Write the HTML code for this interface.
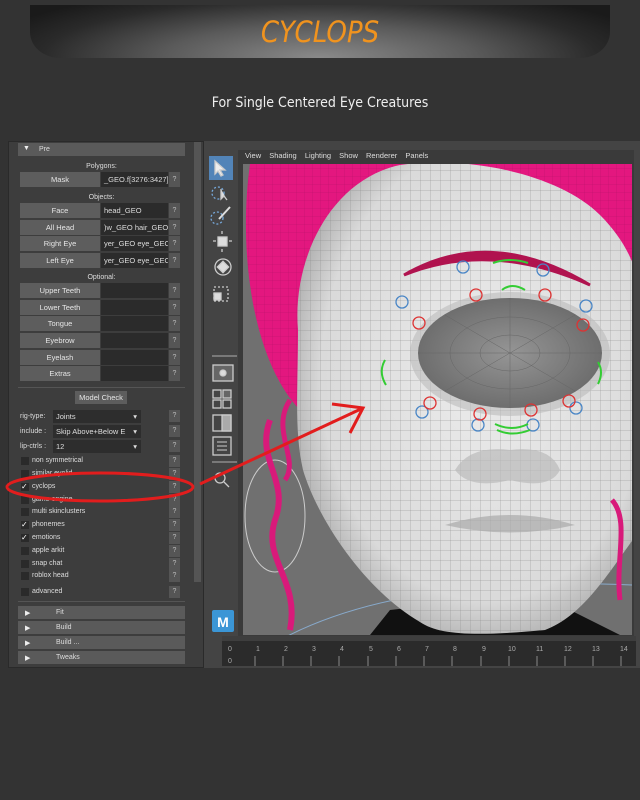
<!DOCTYPE html><html><head><meta charset="utf-8"><style>
*{margin:0;padding:0;box-sizing:border-box}
body{width:640px;height:800px;background:#333;position:relative;overflow:hidden;font-family:"Liberation Sans",sans-serif}
.a{position:absolute}
.hdr{left:30px;top:5px;width:580px;height:53px;border-radius:0 0 30px 30px/0 0 26px 26px;background:radial-gradient(ellipse 60% 140% at 50% 100%,#8a8a8a 0%,#5a5a5a 45%,#2a2a2a 80%,#1a1a1a 100%)}
.t{color:#ddd;font-size:7px;white-space:nowrap}
.btn{background:#5d5d5d;color:#e6e6e6;font-size:7.5px;text-align:center;line-height:15px;height:15px}
.fld{background:#2b2b2b;color:#ddd;font-size:7.5px;line-height:15px;height:15px;padding-left:3px;overflow:hidden;white-space:nowrap}
.q{background:#555;color:#bbb;font-size:7px;text-align:center;line-height:15px;width:11px;height:15px}
.cb{width:8px;height:8px;background:#2a2a2a}
.lab{color:#ddd;font-size:7px}
.fr{background:#5a5a5a;height:13px;color:#ddd;font-size:7px;line-height:13px;padding-left:38px}
</style></head><body>
<div class="a hdr"></div>
<div class="a" style="left:0;width:640px;top:15px;text-align:center;color:#f0931e;font-style:italic;font-size:29px;font-family:'DejaVu Sans Condensed','Liberation Sans Narrow',sans-serif">CYCLOPS</div>
<div class="a" style="left:0;width:640px;top:95px;text-align:center;color:#eee;font-size:14px;font-family:'DejaVu Sans Condensed','Liberation Sans Narrow',sans-serif">For Single Centered Eye Creatures</div>

<div class="a" style="left:8px;top:141px;width:196px;height:527px;background:#3d3d3d;border:1px solid #2a2a2a"></div>
<div class="a" style="left:194px;top:142px;width:7px;height:440px;background:#555"></div>
<div class="a" style="left:18px;top:143px;width:167px;height:13px;background:#5a5a5a"></div>
<div class="a t" style="left:23px;top:145px;color:#eee">▼</div><div class="a t" style="left:39px;top:146px">Pre</div>
<div class="a t" style="left:0;width:203px;text-align:center;top:163px">Polygons:</div>
<div class="a btn" style="left:20px;top:172px;width:80px">Mask</div><div class="a fld" style="left:101px;top:172px;width:67px">_GEO.f[3276:3427]</div><div class="a q" style="left:169px;top:172px">?</div>
<div class="a t" style="left:0;width:203px;text-align:center;top:194px">Objects:</div>
<div class="a btn" style="left:20px;top:203px;width:80px">Face</div><div class="a fld" style="left:101px;top:203px;width:67px">head_GEO</div><div class="a q" style="left:169px;top:203px">?</div>
<div class="a btn" style="left:20px;top:220px;width:80px">All Head</div><div class="a fld" style="left:101px;top:220px;width:67px">)w_GEO hair_GEO</div><div class="a q" style="left:169px;top:220px">?</div>
<div class="a btn" style="left:20px;top:236px;width:80px">Right Eye</div><div class="a fld" style="left:101px;top:236px;width:67px">yer_GEO eye_GEO</div><div class="a q" style="left:169px;top:236px">?</div>
<div class="a btn" style="left:20px;top:253px;width:80px">Left Eye</div><div class="a fld" style="left:101px;top:253px;width:67px">yer_GEO eye_GEO</div><div class="a q" style="left:169px;top:253px">?</div>
<div class="a t" style="left:0;width:203px;text-align:center;top:274px">Optional:</div>
<div class="a btn" style="left:20px;top:283px;width:80px">Upper Teeth</div><div class="a fld" style="left:101px;top:283px;width:67px"></div><div class="a q" style="left:169px;top:283px">?</div>
<div class="a btn" style="left:20px;top:300px;width:80px">Lower Teeth</div><div class="a fld" style="left:101px;top:300px;width:67px"></div><div class="a q" style="left:169px;top:300px">?</div>
<div class="a btn" style="left:20px;top:316px;width:80px">Tongue</div><div class="a fld" style="left:101px;top:316px;width:67px"></div><div class="a q" style="left:169px;top:316px">?</div>
<div class="a btn" style="left:20px;top:333px;width:80px">Eyebrow</div><div class="a fld" style="left:101px;top:333px;width:67px"></div><div class="a q" style="left:169px;top:333px">?</div>
<div class="a btn" style="left:20px;top:350px;width:80px">Eyelash</div><div class="a fld" style="left:101px;top:350px;width:67px"></div><div class="a q" style="left:169px;top:350px">?</div>
<div class="a btn" style="left:20px;top:366px;width:80px">Extras</div><div class="a fld" style="left:101px;top:366px;width:67px"></div><div class="a q" style="left:169px;top:366px">?</div>
<div class="a" style="left:18px;top:387px;width:167px;height:1px;background:#555"></div>
<div class="a btn" style="left:75px;top:391px;width:52px;height:13px;line-height:13px">Model Check</div>
<div class="a lab" style="left:20px;top:413px">rig-type:</div><div class="a fld" style="left:53px;top:410px;width:88px;height:13px;line-height:13px;background:#2d2d2d">Joints<span style="float:right;margin-right:4px">▾</span></div>
<div class="a lab" style="left:20px;top:428px">include :</div><div class="a fld" style="left:53px;top:425px;width:88px;height:13px;line-height:13px;background:#2d2d2d">Skip Above+Below E<span style="float:right;margin-right:4px">▾</span></div>
<div class="a lab" style="left:20px;top:443px">lip-ctrls :</div><div class="a fld" style="left:53px;top:440px;width:88px;height:13px;line-height:13px;background:#2d2d2d">12<span style="float:right;margin-right:4px">▾</span></div>
<div class="a q" style="left:169px;top:410px;height:12px;line-height:12px">?</div><div class="a q" style="left:169px;top:425px;height:12px;line-height:12px">?</div><div class="a q" style="left:169px;top:440px;height:12px;line-height:12px">?</div>

<div class="a cb" style="left:21px;top:457px"></div><div class="a lab" style="left:32px;top:457px">non symmetrical</div><div class="a q" style="left:169px;top:455px;height:12px;line-height:12px">?</div>
<div class="a cb" style="left:21px;top:470px"></div><div class="a lab" style="left:32px;top:470px">similar eyelid</div><div class="a q" style="left:169px;top:468px;height:12px;line-height:12px">?</div>
<div class="a cb" style="left:21px;top:483px;color:#fff;font-size:8px;line-height:8px">✓</div><div class="a lab" style="left:32px;top:483px">cyclops</div><div class="a q" style="left:169px;top:481px;height:12px;line-height:12px">?</div>
<div class="a cb" style="left:21px;top:496px"></div><div class="a lab" style="left:32px;top:496px">game engine</div><div class="a q" style="left:169px;top:494px;height:12px;line-height:12px">?</div>
<div class="a cb" style="left:21px;top:508px"></div><div class="a lab" style="left:32px;top:508px">multi skinclusters</div><div class="a q" style="left:169px;top:506px;height:12px;line-height:12px">?</div>
<div class="a cb" style="left:21px;top:521px;color:#fff;font-size:8px;line-height:8px">✓</div><div class="a lab" style="left:32px;top:521px">phonemes</div><div class="a q" style="left:169px;top:519px;height:12px;line-height:12px">?</div>
<div class="a cb" style="left:21px;top:534px;color:#fff;font-size:8px;line-height:8px">✓</div><div class="a lab" style="left:32px;top:534px">emotions</div><div class="a q" style="left:169px;top:532px;height:12px;line-height:12px">?</div>
<div class="a cb" style="left:21px;top:547px"></div><div class="a lab" style="left:32px;top:547px">apple arkit</div><div class="a q" style="left:169px;top:545px;height:12px;line-height:12px">?</div>
<div class="a cb" style="left:21px;top:560px"></div><div class="a lab" style="left:32px;top:560px">snap chat</div><div class="a q" style="left:169px;top:558px;height:12px;line-height:12px">?</div>
<div class="a cb" style="left:21px;top:572px"></div><div class="a lab" style="left:32px;top:572px">roblox head</div><div class="a q" style="left:169px;top:570px;height:12px;line-height:12px">?</div>
<div class="a cb" style="left:21px;top:588px"></div><div class="a lab" style="left:32px;top:588px">advanced</div><div class="a q" style="left:169px;top:586px;height:12px;line-height:12px">?</div>
<div class="a" style="left:18px;top:601px;width:167px;height:1px;background:#555"></div>
<div class="a fr" style="left:18px;top:606px;width:167px">Fit</div><div class="a t" style="left:25px;top:609px;color:#eee">▶</div>
<div class="a fr" style="left:18px;top:621px;width:167px">Build</div><div class="a t" style="left:25px;top:624px;color:#eee">▶</div>
<div class="a fr" style="left:18px;top:636px;width:167px">Build ...</div><div class="a t" style="left:25px;top:639px;color:#eee">▶</div>
<div class="a fr" style="left:18px;top:651px;width:167px">Tweaks</div><div class="a t" style="left:25px;top:654px;color:#eee">▶</div>

<div class="a" style="left:204px;top:141px;width:436px;height:527px;background:#444"></div>
<div class="a" style="left:238px;top:150px;width:396px;height:487px;background:#3a3a3a"></div>
<div class="a" style="left:209px;top:156px;width:24px;height:24px;background:#5284b8"></div>
<div class="a" style="left:245px;top:151px;font-size:7.5px;color:#ddd;word-spacing:6px">View Shading Lighting Show Renderer Panels</div>
<svg class="a" style="left:204px;top:141px" width="436" height="527">
<g fill="none" stroke="#ccc" stroke-width="1.3">
<path d="M11 20 L11 33 L14 30 L17 35 L19 34 L16 29 L21 29 Z" fill="#eee"/>
<circle cx="14" cy="52" r="6" stroke-dasharray="2 2" stroke="#7ad"/><path d="M17 48 l0 10 3-3 3 4" fill="#ddd"/>
<circle cx="13" cy="77" r="6" stroke-dasharray="2 2" stroke="#7ad"/><path d="M15 78 L26 66" stroke="#ddd" stroke-width="2"/>
<rect x="14" y="96" width="9" height="9" fill="#ddd"/><path d="M18 90v3M18 108v3M9 100h3M25 100h3"/>
<circle cx="19" cy="126" r="8"/><rect x="15" y="122" width="8" height="8" fill="#ddd" transform="rotate(45 19 126)"/>
<rect x="10" y="146" width="14" height="14" stroke-dasharray="2 2"/><rect x="10" y="152" width="7" height="7" fill="#ddd"/>
<path d="M8 215h25M8 321h25" stroke="#999"/>
<rect x="9" y="224" width="20" height="16" fill="#666"/><circle cx="19" cy="232" r="3" fill="#ddd"/>
<rect x="9" y="249" width="8" height="8"/><rect x="19" y="249" width="8" height="8" fill="#666"/><rect x="9" y="259" width="8" height="8"/><rect x="19" y="259" width="8" height="8"/>
<rect x="9" y="274" width="18" height="16"/><rect x="18" y="274" width="9" height="16" fill="#aaa"/>
<rect x="9" y="296" width="18" height="18"/><path d="M13 301h10M13 305h10M13 309h10" stroke-width="1"/>
<circle cx="16" cy="337" r="5"/><path d="M20 341l5 5"/>
</g>
<rect x="8" y="469" width="22" height="22" rx="2" fill="#3b96d6"/><text x="19" y="486" fill="#fff" font-size="14" font-weight="bold" text-anchor="middle" font-family="Liberation Sans">M</text>
<rect x="18" y="495" width="414" height="30" fill="#2b2b2b"/>
<rect x="18" y="495" width="414" height="5" fill="#3e3e3e"/>
<g fill="#aaa" font-size="7" font-family="Liberation Sans">
<text x="24" y="510">0</text><text x="24" y="522">0</text>
<text x="52" y="510">1</text><text x="80" y="510">2</text><text x="108" y="510">3</text><text x="136" y="510">4</text><text x="165" y="510">5</text><text x="193" y="510">6</text><text x="221" y="510">7</text><text x="249" y="510">8</text><text x="278" y="510">9</text><text x="304" y="510">10</text><text x="332" y="510">11</text><text x="360" y="510">12</text><text x="388" y="510">13</text><text x="416" y="510">14</text>
</g>
<g stroke="#888"><path d="M51 515v10M79 515v10M107 515v10M135 515v10M164 515v10M192 515v10M220 515v10M248 515v10M277 515v10M305 515v10M333 515v10M361 515v10M389 515v10M417 515v10"/></g>
</svg>
<svg class="a" style="left:243px;top:164px" width="389" height="471" viewBox="243 164 389 471">
<defs>
<pattern id="g" width="10" height="10" patternUnits="userSpaceOnUse"><path d="M0 0H10M0 0V10" stroke="#888" stroke-width=".5" fill="none"/></pattern>
<pattern id="h" width="8" height="8" patternUnits="userSpaceOnUse"><path d="M0 0H8M0 0V8" stroke="#b01065" stroke-width=".4" fill="none"/></pattern>
<radialGradient id="fg" cx="55%" cy="45%" r="60%"><stop offset="0" stop-color="#ececec"/><stop offset=".8" stop-color="#dadada"/><stop offset="1" stop-color="#aaa"/></radialGradient>
<radialGradient id="eg" cx="50%" cy="50%" r="60%"><stop offset="0" stop-color="#959595"/><stop offset="1" stop-color="#666"/></radialGradient>
</defs>
<rect x="243" y="164" width="389" height="471" fill="#707070"/>
<path d="M250 164 C238 250 252 360 300 410 L420 300 L560 200 L632 300 L632 164 Z" fill="#e3177f"/>
<path d="M250 164 C238 250 252 360 300 410 L420 300 L560 200 L632 300 L632 164 Z" fill="url(#h)"/>
<ellipse cx="275" cy="516" rx="30" ry="56" fill="none" stroke="#ccc" stroke-width="1"/>
<path d="M280 640 Q400 575 632 585" fill="none" stroke="#8ac" stroke-width="1"/>
<path d="M370 635 L390 610 Q470 600 560 605 L620 635Z" fill="#111"/>
<path d="M298 330 C292 260 330 180 400 165 C470 155 560 175 600 215 C625 240 640 270 640 300 L640 530 C610 570 585 615 545 630 C480 636 440 636 420 622 C365 590 318 520 303 470 C294 430 298 390 298 330Z" fill="url(#fg)"/>
<path d="M298 330 C292 260 330 180 400 165 C470 155 560 175 600 215 C625 240 640 270 640 300 L640 530 C610 570 585 615 545 630 C480 636 440 636 420 622 C365 590 318 520 303 470 C294 430 298 390 298 330Z" fill="url(#g)"/>
<path d="M270 420 C255 460 290 480 275 520 C262 560 300 580 290 630" fill="none" stroke="#d81a7a" stroke-width="6"/>
<path d="M290 400 C270 430 300 460 285 480" fill="none" stroke="#d81a7a" stroke-width="5"/>
<path d="M612 500 C630 520 615 560 620 600" fill="none" stroke="#d81a7a" stroke-width="5"/>
<ellipse cx="510" cy="354" rx="100" ry="62" fill="#bbb" opacity=".6"/>
<ellipse cx="510" cy="353" rx="92" ry="55" fill="url(#eg)"/>
<g stroke="#666" stroke-width=".5" fill="none"><ellipse cx="510" cy="353" rx="30" ry="18"/><ellipse cx="510" cy="353" rx="60" ry="36"/><path d="M418 353H602M510 298V408M445 315L575 391M445 391L575 315"/></g>
<path d="M404 275 Q490 225 590 285 Q490 240 404 275Z" fill="#b0134f" stroke="#b0134f" stroke-width="3"/>
<path d="M455 470 Q470 445 510 450 Q550 445 560 470 Q550 490 510 480 Q470 490 455 470Z" fill="#bbb" opacity=".7"/>
<path d="M445 525 Q510 505 575 525 Q510 540 445 525Z" fill="#aaa" opacity=".7"/>
<g fill="none" stroke-width="1.3">
<g stroke="#4a86c6"><circle cx="463" cy="267" r="6"/><circle cx="543" cy="270" r="6"/><circle cx="402" cy="302" r="6"/><circle cx="586" cy="306" r="6"/><circle cx="422" cy="412" r="6"/><circle cx="478" cy="425" r="6"/><circle cx="533" cy="425" r="6"/><circle cx="576" cy="408" r="6"/></g>
<g stroke="#d33"><circle cx="476" cy="295" r="6"/><circle cx="545" cy="295" r="6"/><circle cx="419" cy="323" r="6"/><circle cx="583" cy="325" r="6"/><circle cx="430" cy="403" r="6"/><circle cx="480" cy="414" r="6"/><circle cx="531" cy="410" r="6"/><circle cx="569" cy="401" r="6"/></g>
<g stroke="#3c3" stroke-width="2"><path d="M493 263 Q510 257 528 263M502 290 Q512 282 525 290M385 360 Q378 372 386 385M598 362 Q604 372 598 384M495 424 Q512 432 528 424M497 430 Q512 437 530 430"/></g>
</g>
</svg>
<svg class="a" style="left:0;top:0" width="640" height="800" pointer-events="none">
<ellipse cx="100" cy="487" rx="93" ry="14" fill="none" stroke="#e21d1d" stroke-width="3"/>
<path d="M200 484 L363 408 M332 404 L363 408 L350 433" fill="none" stroke="#e21d1d" stroke-width="3"/>
</svg>
</body></html>
